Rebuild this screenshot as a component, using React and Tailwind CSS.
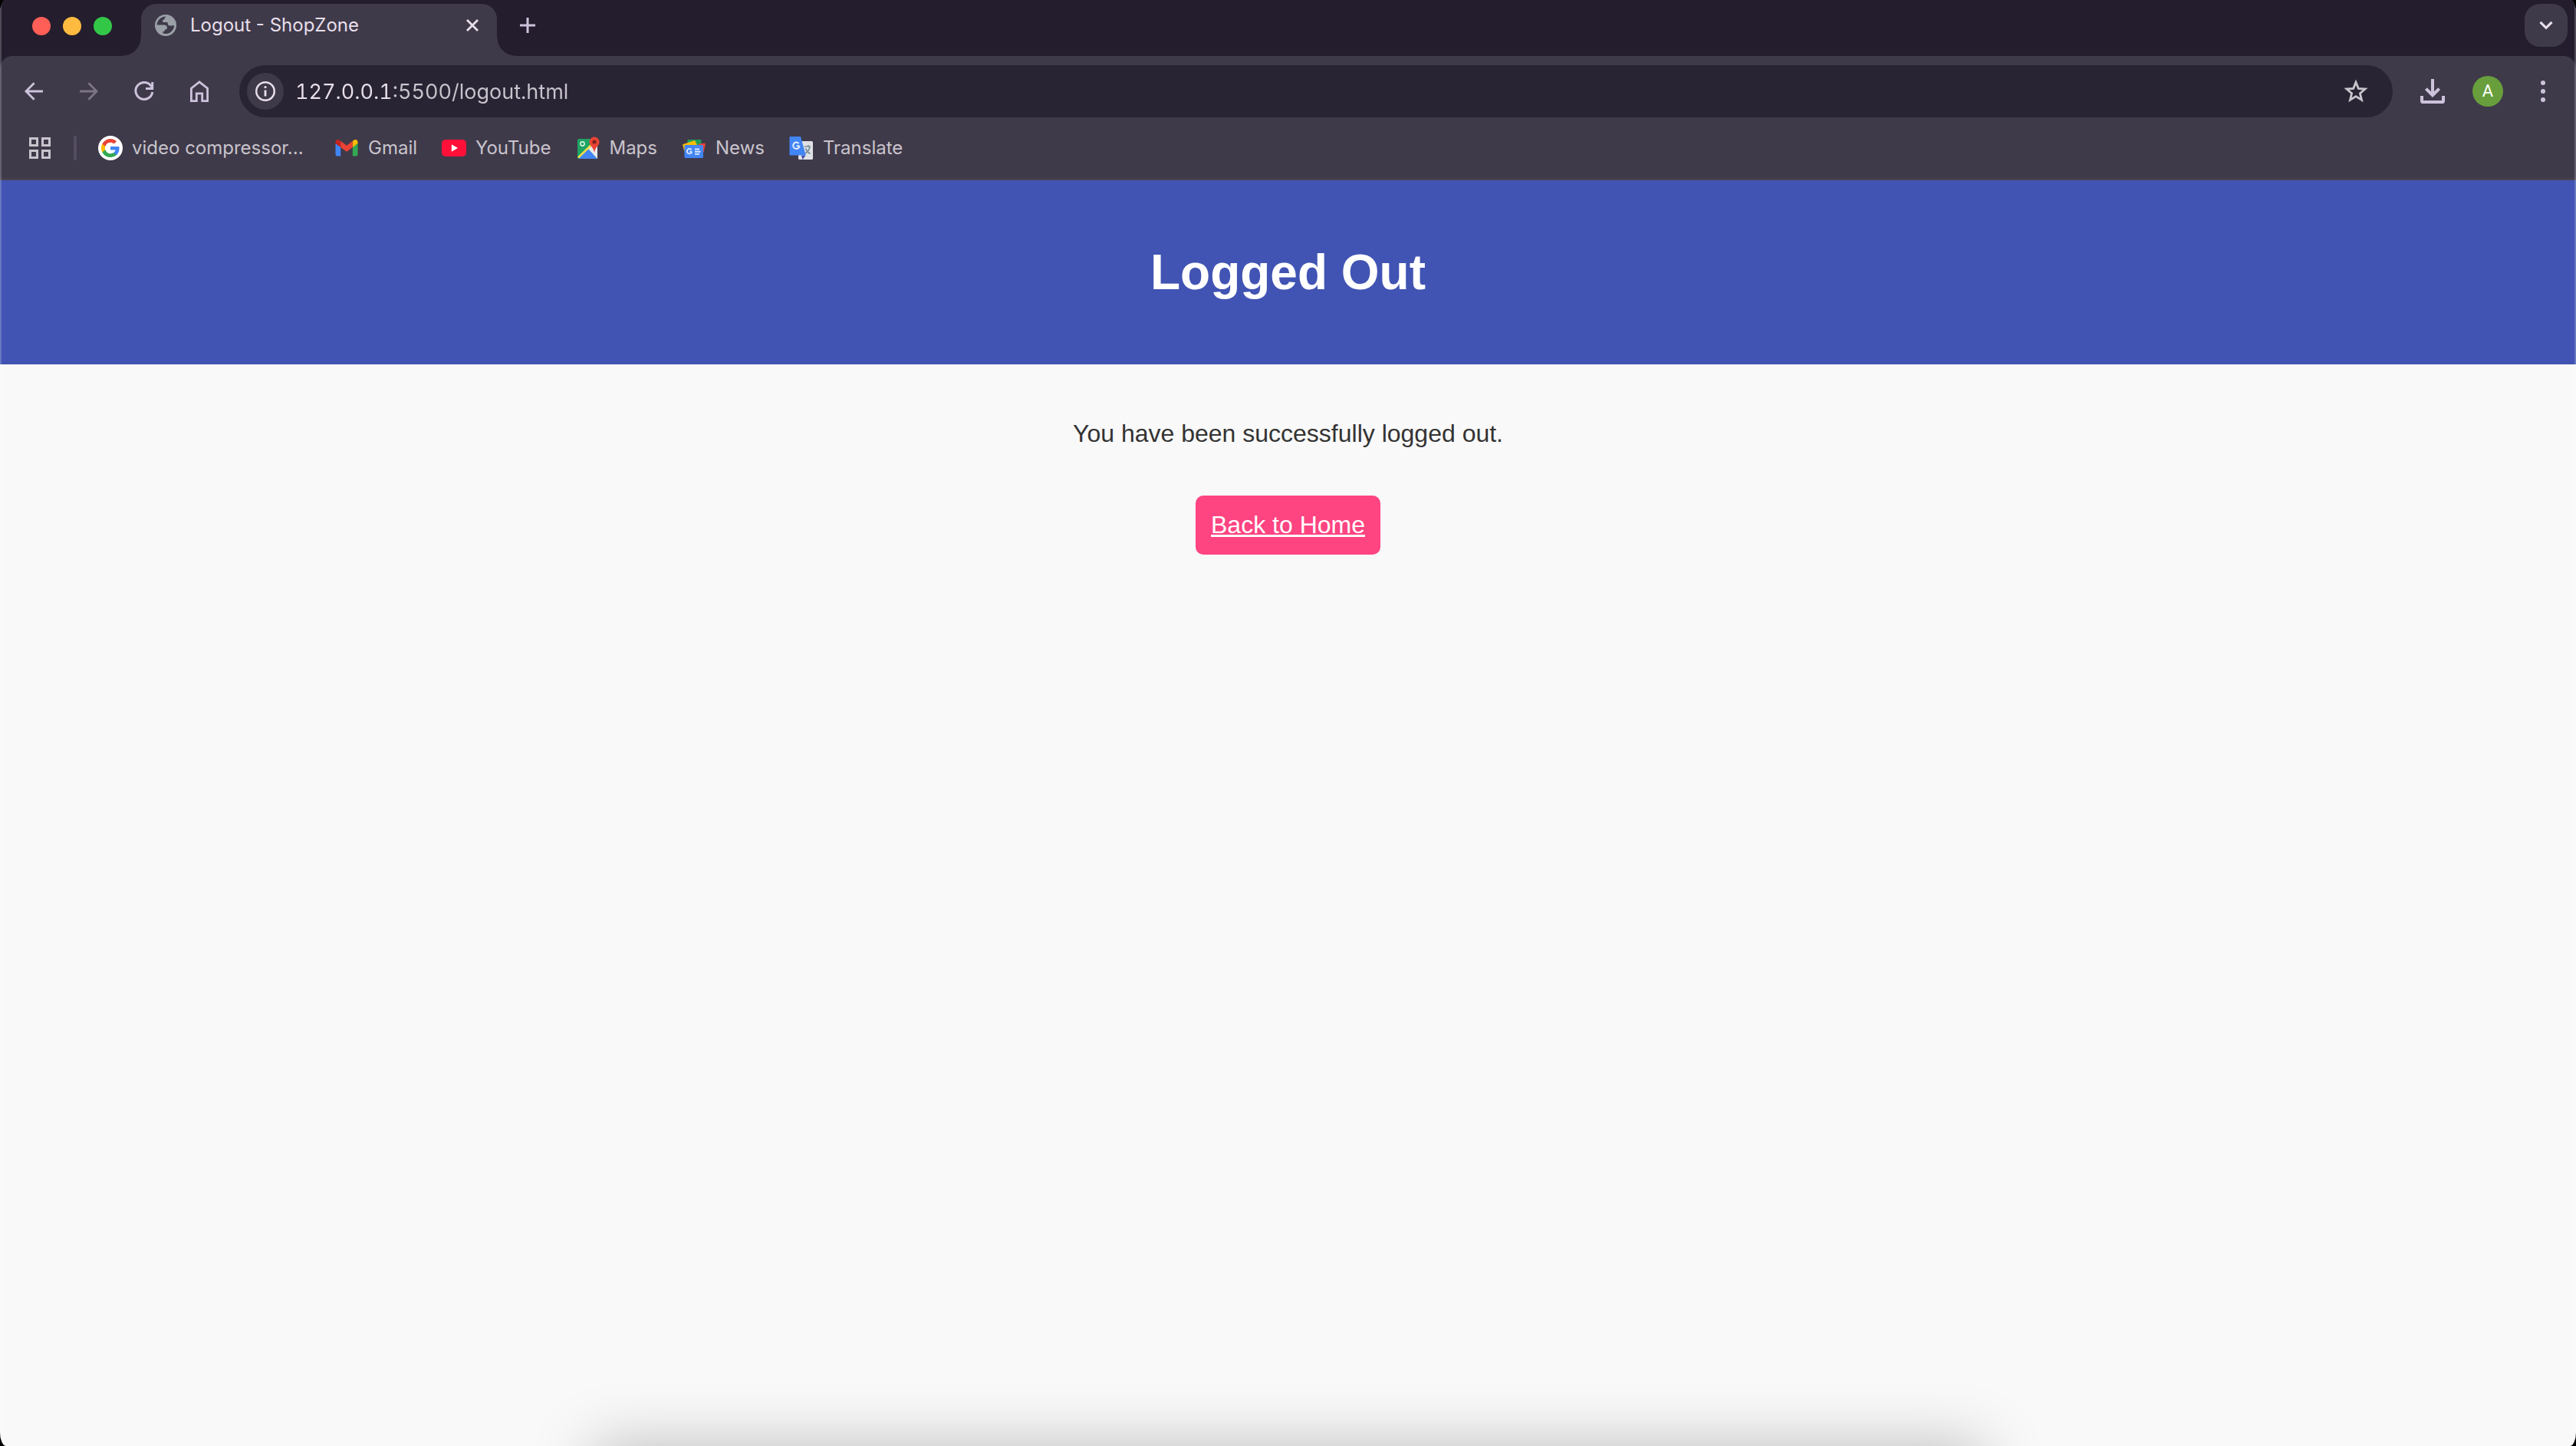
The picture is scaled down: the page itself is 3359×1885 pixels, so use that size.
import React from "react";

function BackIcon({ className }) {
  return (
    <svg viewBox="0 0 24 24" className={className} fill="none" stroke="currentColor" strokeWidth="2.8">
      <path d="M24 12H2M12.6 1.2 1.9 12l10.7 10.8" />
    </svg>
  );
}

function ReloadIcon() {
  return (
    <svg viewBox="0 0 26 26" className="size-[26px]" fill="none" stroke="currentColor" strokeWidth="3">
      <path d="M22.6 7.2A11 11 0 1 0 23.8 14" />
      <path d="M23.7 1v8.5H15" />
    </svg>
  );
}

function HomeIcon() {
  return (
    <svg viewBox="0 0 24 28" className="h-7 w-6" fill="none" stroke="currentColor" strokeWidth="2.8">
      <path d="M1.4 26.6V10.2L12 1.8l10.6 8.4v16.4h-6.9v-9.8H8.3v9.8z" />
    </svg>
  );
}

function InfoIcon() {
  return (
    <svg viewBox="0 0 26 26" className="size-[26px]" fill="none" stroke="currentColor" strokeWidth="2.4">
      <circle cx="13" cy="13" r="11.8" />
      <path d="M13 11.6v8M13 6.2v2.8" strokeWidth="2.8" />
    </svg>
  );
}

function StarIcon() {
  return (
    <svg viewBox="0 0 32 32" className="size-8" fill="none" stroke="currentColor" strokeWidth="2.8">
      <path d="M16 4.2l3.3 8.1 8.8.7-6.7 5.7 2.1 8.5-7.5-4.6-7.5 4.6 2.1-8.5-6.7-5.7 8.8-.7z" />
    </svg>
  );
}

function DownloadIcon() {
  return (
    <svg viewBox="0 0 32 32" className="size-8" fill="none" stroke="currentColor" strokeWidth="4">
      <path d="M16 0v21M7.4 12.6 16 21.2l8.6-8.6" />
      <path d="M2 22v6.4c0 1 .6 1.6 1.6 1.6h24.8c1 0 1.6-.6 1.6-1.6V22" />
    </svg>
  );
}

function GlobeIcon() {
  return (
    <svg viewBox="0 0 28 28" className="size-7">
      <circle cx="14" cy="14" r="14" fill="#9aa0a6" />
      <path
        fill="#3f3a4a"
        d="M15.2 2.5c-1.4.5-2.4 1.4-2.4 2.7 0 .9-.8 1.3-1.8 1.5-1 .3-.9 1.3-.9 2.3 0 .9 1 1.1 2 1.1h3.8c.6 0 .8.6.8 1.3 0 1.8 1.2 3 2.9 3h3.2c.8 0 1.3-.4 2.3-.4a11.3 11.3 0 0 1-14.6 10.6v-2.5c1.3 0 2.5-.6 2.5-1.9 0-.8.8-1 1.6-1 .9 0 1.3-.6 1.3-1.4v-.8c0-2.3-1.5-3.6-3.8-3.6H2.6a11.5 11.5 0 0 1 12.6-10.9z"
      />
      <path
        fill="#9aa0a6"
        d="M15.2 3.5c-.9.5-1.3 1-1.3 1.9 0 1.4-1 2.2-2.3 2.4v1.4h4.2c1.4 0 2 .9 2 2.2 0 1.1.8 2 1.9 2h5.6c-.4-5-4-9.3-10.1-9.9z"
      />
    </svg>
  );
}

function AppsIcon() {
  return (
    <svg viewBox="0 0 28 28" className="size-7" fill="none" stroke="currentColor" strokeWidth="3">
      <rect x="1.5" y="1.5" width="9" height="9" />
      <rect x="17.5" y="1.5" width="9" height="9" />
      <rect x="1.5" y="17.5" width="9" height="9" />
      <rect x="17.5" y="17.5" width="9" height="9" />
    </svg>
  );
}

function GoogleIcon() {
  return (
    <svg viewBox="0 0 32 32" className="size-8">
      <circle cx="16" cy="16" r="16" fill="#fff" />
      <g transform="translate(4 4)">
        <path fill="#4285f4" d="M23.5 12.3c0-.9-.1-1.5-.2-2.3H12v4.5h6.5c-.3 1.5-1.1 2.8-2.5 3.7v3h3.9c2.3-2.1 3.6-5.2 3.6-8.9z" />
        <path fill="#34a853" d="M12 24c3.2 0 6-1.1 7.9-2.9l-3.9-3c-1 .7-2.4 1.2-4 1.2-3.1 0-5.8-2.1-6.7-5H1.3v3.1A12 12 0 0 0 12 24z" />
        <path fill="#fbbc05" d="M5.3 14.3a7.2 7.2 0 0 1 0-4.6V6.6h-4a12 12 0 0 0 0 10.8z" />
        <path fill="#ea4335" d="M12 4.8c1.8 0 3.3.6 4.6 1.8L20 3.2A12 12 0 0 0 1.3 6.6l4 3.1c.9-2.9 3.6-4.9 6.7-4.9z" />
      </g>
    </svg>
  );
}

function GmailIcon() {
  return (
    <svg viewBox="0 0 32 32" className="size-8">
      <path fill="#4285f4" d="M1.5 10v14.5c0 1.2 1 2 2 2h4.7V14.5z" />
      <path fill="#34a853" d="M23.8 14.5v12h4.7c1 0 2-.8 2-2V10z" />
      <path fill="#fbbc04" d="M23.8 7v8l6.7-5V8.2c0-3-3.2-4.2-5.3-2.4z" />
      <path fill="#ea4335" d="M8.2 15V6.8L16 12.7l7.8-5.9V15L16 20.8z" />
      <path fill="#c5221f" d="M1.5 8.2V10l6.7 5V7L6.8 5.8C4.7 4.2 1.5 5.2 1.5 8.2z" />
    </svg>
  );
}

function YouTubeIcon() {
  return (
    <svg viewBox="0 0 32 32" className="size-8">
      <rect y="5" width="32" height="22" rx="5" fill="#ff1038" />
      <path fill="#fff" d="M12.8 11.3v9.4l8.2-4.7z" />
    </svg>
  );
}

function MapsIcon() {
  return (
    <svg viewBox="0 0 32 32" className="size-8">
      <rect x="3" y="4" width="26" height="26" rx="2" fill="#1fa463" />
      <path fill="#4285f4" d="M4 30 17 17l12 13z" />
      <path fill="#e8eaed" d="M17 17l5-4h7v17z" />
      <path stroke="#fde047" strokeWidth="2.6" d="M4 28.5 20.5 12.5" />
      <circle cx="9.5" cy="10.5" r="2.6" fill="none" stroke="#d5f0e0" strokeWidth="1.6" />
      <path fill="#ea4335" d="M25 1.5a6.5 6.5 0 0 0-6.5 6.5c0 5 5.3 6.5 6.5 14 1.2-7.5 6.5-9 6.5-14A6.5 6.5 0 0 0 25 1.5z" />
      <circle cx="25" cy="8" r="2.6" fill="#7b231c" />
    </svg>
  );
}

function NewsIcon() {
  return (
    <svg viewBox="0 0 32 32" className="size-8">
      <rect x="7.5" y="5" width="18" height="11" rx="1" fill="#1e9e59" />
      <path fill="#ea4335" d="M22 10.5l8-.8c.6 0 1 .4.9 1l-2.3 10.500H20z" />
      <path fill="#fbbc04" d="M1.2 12.2c-.2-.6.1-1 .6-1.200L17 6l6 12-19.500 2.500z" />
      <rect x="3.5" y="12" width="24.5" height="17" rx="1.5" fill="#4285f4" />
      <path d="M13.2 20.6h-2.9M12.7 18.3a3.2 3.2 0 1 0 .5 2.5M17 17.5h6M17 20.7h7.5M17 23.9h6" fill="none" stroke="#dbe8ff" strokeWidth="1.9" />
    </svg>
  );
}

function TranslateIcon() {
  return (
    <svg viewBox="0 0 32 32" className="size-8">
      <rect x="12" y="7" width="19" height="24" rx="1.5" fill="#dfe1e5" />
      <path d="M20 14h8M25 12v2M27 14.5c-1 4-3.5 7-6 8.5M21.5 16.5c1 3 3.5 5.5 6 7" fill="none" stroke="#78909c" strokeWidth="1.7" />
      <path fill="#3949ab" d="M16 25.5h5.5L17.5 31z" />
      <path fill="#4285f4" d="M1.5 1H15l6.8 24.5H1.5c-.6 0-1-.4-1-1V2c0-.6.4-1 1-1z" />
      <path d="M13.5 13.3H9.7M12.6 10a4.2 4.2 0 1 0 1 3.4" fill="none" stroke="#e3eeff" strokeWidth="2" />
    </svg>
  );
}

const bookmarks = [
  { label: "Gmail", Icon: GmailIcon },
  { label: "YouTube", Icon: YouTubeIcon },
  { label: "Maps", Icon: MapsIcon },
  { label: "News", Icon: NewsIcon },
  { label: "Translate", Icon: TranslateIcon },
];

function TabStrip() {
  return (
    <div className="flex h-[73px] bg-[#241d2d]">
      <div className="flex h-[68px] items-center gap-4 pl-[42px] pr-3.5">
        <button aria-label="Close window" className="size-6 rounded-full bg-[#ff5f57]" />
        <button aria-label="Minimize window" className="size-6 rounded-full bg-[#febb40]" />
        <button aria-label="Zoom window" className="size-6 rounded-full bg-[#33c748]" />
      </div>
      <div className="size-6 self-end bg-[radial-gradient(circle_at_top_left,#241d2d_23px,#3f3a4a_24px)]" />
      <div className="mt-[5px] w-[464px] rounded-t-[20px] bg-[#3f3a4a]">
        <div className="flex h-14 items-center pl-[18px] pr-3">
          <GlobeIcon />
          <span className="ml-[18px] flex-1 text-[24px] leading-8 text-[#e8dfea]">Logout - ShopZone</span>
          <button aria-label="Close tab" className="flex size-10 items-center justify-center text-[#e8dfea]">
            <svg viewBox="0 0 16 16" className="size-4" stroke="currentColor" strokeWidth="2.8">
              <path d="M1 1l14 14M15 1 1 15" />
            </svg>
          </button>
        </div>
      </div>
      <div className="size-6 self-end bg-[radial-gradient(circle_at_top_right,#241d2d_23px,#3f3a4a_24px)]" />
      <button aria-label="New tab" className="mt-[5px] flex h-14 w-8 items-center justify-center text-[#cdc2db]">
        <svg viewBox="0 0 20 20" className="size-5" stroke="currentColor" strokeWidth="3">
          <path d="M10 0v20M0 10h20" />
        </svg>
      </button>
      <button
        aria-label="Search tabs"
        className="ml-auto mr-[11px] mt-[5px] flex size-14 items-center justify-center rounded-[20px] bg-[#3f3a4a] text-[#e8dfea]"
      >
        <svg viewBox="0 0 18 12" className="h-3 w-[18px]" fill="none" stroke="currentColor" strokeWidth="3.2">
          <path d="M1.5 1.8 9 9.3l7.5-7.5" />
        </svg>
      </button>
    </div>
  );
}

function Toolbar() {
  const slot = "flex h-[68px] w-[72px] items-center justify-center text-[#cdc2db]";
  return (
    <div className="flex h-[92px] items-center pl-2 pr-[7px]">
      <button aria-label="Back" className={slot}>
        <BackIcon className="size-6" />
      </button>
      <button aria-label="Forward" disabled className="flex h-[68px] w-[72px] items-center justify-center text-[#7d7486]">
        <BackIcon className="size-6 rotate-180" />
      </button>
      <button aria-label="Reload" className={slot}>
        <ReloadIcon />
      </button>
      <button aria-label="Home" className={slot}>
        <HomeIcon />
      </button>
      <div className="mx-4 flex h-[68px] flex-1 items-center rounded-full bg-[#292434] pl-2.5 pr-3">
        <button
          aria-label="View site information"
          className="flex size-12 items-center justify-center rounded-full bg-[#3f3a4a] text-[#e8dfea]"
        >
          <InfoIcon />
        </button>
        <input
          aria-label="Address"
          defaultValue="127.0.0.1:5500/logout.html"
          className="ml-[15px] h-12 flex-1 bg-[linear-gradient(90deg,#e8dfea_122px,#c9c4cc_122px)] bg-clip-text text-[27px] tabular-nums text-transparent outline-none"
        />
        <button aria-label="Bookmark this tab" className="flex w-[72px] items-center justify-center text-[#c9c4cc]">
          <StarIcon />
        </button>
      </div>
      <button aria-label="Downloads" className={slot}>
        <DownloadIcon />
      </button>
      <button aria-label="Profile" className={slot}>
        <span className="flex size-10 items-center justify-center rounded-full bg-[#689f3c] font-[Roboto] text-[22px] leading-6 text-white">
          A
        </span>
      </button>
      <button aria-label="Menu" className={slot}>
        <svg viewBox="0 0 6 28" className="h-7 w-1.5" fill="currentColor">
          <circle cx="3" cy="3" r="3" />
          <circle cx="3" cy="14" r="3" />
          <circle cx="3" cy="25" r="3" />
        </svg>
      </button>
    </div>
  );
}

function BookmarksBar() {
  return (
    <nav aria-label="Bookmarks" className="flex h-[70px] items-start border-b-2 border-[#48454e] text-[#c9c4cc]">
      <div className="flex h-14 items-center pl-[38px]">
        <button aria-label="Apps">
          <AppsIcon />
        </button>
        <div className="ml-[30px] mr-7 h-8 w-1 rounded-full bg-[#544d61]" />
        <div className="flex gap-8 text-[24px] leading-8">
          <a href="#" className="flex items-center gap-3">
            <GoogleIcon />
            <span className="w-[232px]">video compressor...</span>
          </a>
          {bookmarks.map(({ label, Icon }) => (
            <a key={label} href="#" className="flex items-center gap-3">
              <Icon />
              {label}
            </a>
          ))}
        </div>
      </div>
    </nav>
  );
}

export default function App() {
  return (
    <div className="bg-black">
      <div className="relative flex min-h-screen flex-col overflow-hidden bg-[#f9f9f9] [border-radius:8px/18px]">
        <div className="bg-[#241d2d] font-[Inter,sans-serif]">
          <TabStrip />
          <div className="rounded-t-2xl bg-[#3f3a4a]">
            <Toolbar />
            <BookmarksBar />
          </div>
        </div>

        <div className="flex flex-1 flex-col text-center font-['Liberation_Sans',Arial,sans-serif] text-[32px] leading-[37px] text-[#333]">
          <header className="bg-[#4154b3] py-[83px] text-white">
            <h1 className="text-[64px] font-bold leading-[74px]">Logged Out</h1>
          </header>
          <main className="px-10 pt-[72px]">
            <p>You have been successfully logged out.</p>
            <a href="#" className="mt-[62px] inline-block rounded-[10px] bg-[#fe4481] p-5 text-white underline">
              Back to Home
            </a>
          </main>
        </div>

        <div className="pointer-events-none absolute inset-0 border-x-2 border-white/20" />
        <div className="pointer-events-none absolute left-[23%] right-[23%] top-full h-20 shadow-[0_0_80px_rgba(0,0,0,0.25)]" />
      </div>
    </div>
  );
}
